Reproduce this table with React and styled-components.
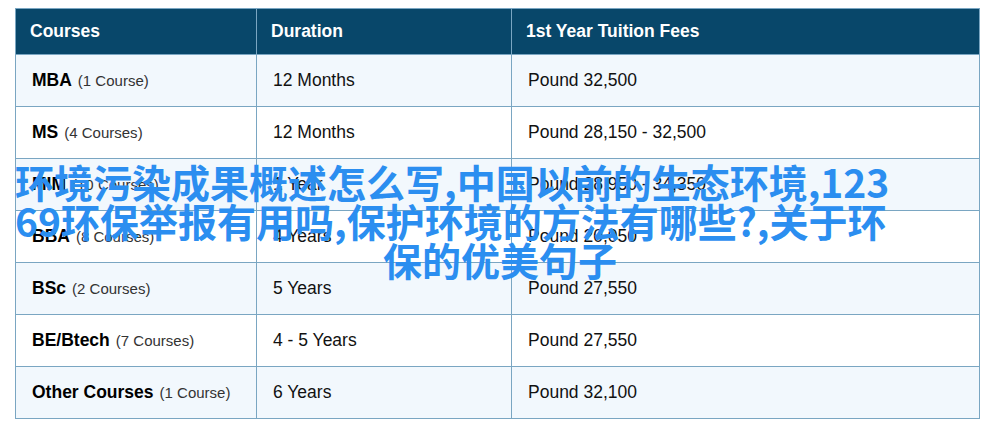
import React from "react";
import styled, { createGlobalStyle } from "styled-components";

const GlobalStyle = createGlobalStyle`
  html, body {
    margin: 0;
    padding: 0;
    background: #ffffff;
  }
  body {
    font-family: "Liberation Sans", Arial, sans-serif;
  }
`;

const Page = styled.div`
  position: relative;
  width: 1000px;
  height: 436px;
  padding: 8px 0 0 15px;
  box-sizing: border-box;
`;

const Table = styled.table`
  width: 964px;
  border-collapse: collapse;
  table-layout: fixed;
  border: 1px solid #7aa6c2;
`;

const HeadCell = styled.th`
  width: ${({ $w }) => $w}px;
  height: 46px;
  padding: 0 0 0 ${({ $pad }) => $pad}px;
  box-sizing: border-box;
  background: #08476a;
  color: #ffffff;
  font-size: 17.5px;
  font-weight: 700;
  text-align: left;
  border: 1px solid #7aa6c2;
  border-top: none;
`;

const Row = styled.tr`
  background: ${({ $alt }) => ($alt ? "#f2f8fd" : "#ffffff")};
`;

const Cell = styled.td`
  height: 52px;
  padding: 0 0 0 ${({ $pad }) => $pad}px;
  box-sizing: border-box;
  font-size: 17.5px;
  color: #111111;
  border: 1px solid #7aa6c2;
  white-space: nowrap;
`;

const CourseName = styled.b`
  font-weight: 700;
  color: #000000;
`;

const CourseCount = styled.span`
  margin-left: 6px;
  font-size: 15px;
  color: #333333;
`;

const Overlay = styled.div`
  position: absolute;
  left: 15px;
  top: 162px;
  width: 970px;
  font-family: "Noto Sans CJK SC", "Noto Sans", sans-serif;
  font-size: 39px;
  font-weight: 700;
  line-height: 39px;
  color: #2b8ef0;
  pointer-events: none;
`;

const OverlayLine = styled.div`
  white-space: nowrap;
  text-align: ${({ $center }) => ($center ? "center" : "left")};
`;

const rows = [
  ["MBA", "1 Course", "12 Months", "Pound 32,500"],
  ["MS", "4 Courses", "12 Months", "Pound 28,150 - 32,500"],
  ["MIM", "10 Courses", "1 Year", "Pound 28,950 - 34,350"],
  ["BBA", "8 Courses", "4 Years", "Pound 20,050"],
  ["BSc", "2 Courses", "5 Years", "Pound 27,550"],
  ["BE/Btech", "7 Courses", "4 - 5 Years", "Pound 27,550"],
  ["Other Courses", "1 Course", "6 Years", "Pound 32,100"],
];

export default function App() {
  return (
    <Page>
      <GlobalStyle />
      <Table>
        <thead>
          <tr>
            <HeadCell $w={241} $pad={14}>Courses</HeadCell>
            <HeadCell $w={255} $pad={14}>Duration</HeadCell>
            <HeadCell $w={468} $pad={14}>1st Year Tuition Fees</HeadCell>
          </tr>
        </thead>
        <tbody>
          {rows.map((r, i) => (
            <Row key={r[0]} $alt={i % 2 === 0}>
              <Cell $pad={16}>
                <CourseName>{r[0]}</CourseName>
                <CourseCount>({r[1]})</CourseCount>
              </Cell>
              <Cell $pad={16}>{r[2]}</Cell>
              <Cell $pad={16}>{r[3]}</Cell>
            </Row>
          ))}
        </tbody>
      </Table>
      <Overlay>
        <OverlayLine>环境污染成果概述怎么写,中国以前的生态环境,123</OverlayLine>
        <OverlayLine>69环保举报有用吗,保护环境的方法有哪些?,关于环</OverlayLine>
        <OverlayLine $center>保的优美句子</OverlayLine>
      </Overlay>
    </Page>
  );
}
